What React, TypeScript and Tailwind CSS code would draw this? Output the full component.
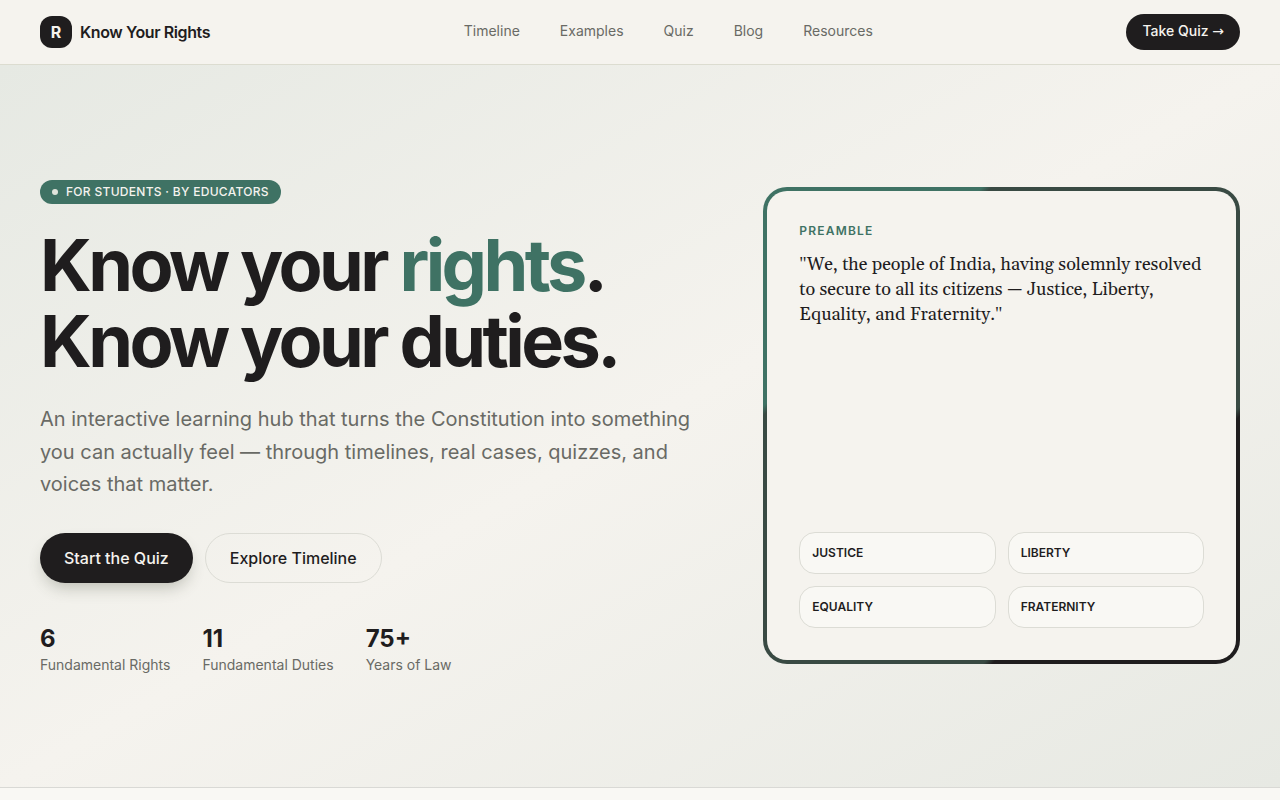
const NAV_LINKS = [
  { label: "Timeline", href: "#timeline" },
  { label: "Examples", href: "#examples" },
  { label: "Quiz", href: "#quiz" },
  { label: "Blog", href: "#blog" },
  { label: "Resources", href: "#resources" },
];

const STATS = [
  { value: "6", label: "Fundamental Rights" },
  { value: "11", label: "Fundamental Duties" },
  { value: "75+", label: "Years of Law" },
];

const VALUES = ["Justice", "Liberty", "Equality", "Fraternity"];

function Navbar() {
  return (
    <header className="border-b border-[#dcdcd0] bg-[#f5f3ee]">
      <div className="mx-auto flex h-16 max-w-7xl items-center justify-between px-10">
        <a href="#top" className="flex items-center gap-2">
          <span className="flex h-8 w-8 items-center justify-center rounded-xl bg-[#1f1d1e] font-bold text-[#f5f3ee]">
            R
          </span>
          <span className="font-semibold tracking-tight">Know Your Rights</span>
        </a>
        <nav className="hidden items-center gap-10 pb-0.5 text-sm text-[#696a65] md:flex">
          {NAV_LINKS.map((link) => (
            <a key={link.label} href={link.href} className="hover:text-[#1f1d1e]">
              {link.label}
            </a>
          ))}
        </nav>
        <a
          href="#quiz"
          className="flex h-9 items-center rounded-full bg-[#1f1d1e] px-4 pb-0.5 text-sm font-medium text-[#f5f3ee]"
        >
          <span>
            Take Quiz <span className="font-['DejaVu_Sans',sans-serif]">→</span>
          </span>
        </a>
      </div>
    </header>
  );
}

function PreambleCard() {
  return (
    <div className="aspect-square rounded-3xl bg-[linear-gradient(135deg,#3f7264_23%,#394a43_24%,#394a43_73%,#1f1d1e_74%)] p-1">
      <div className="flex h-full flex-col justify-between rounded-[20px] bg-[#f5f3ee] p-8">
        <div>
          <div className="text-xs font-semibold uppercase tracking-widest text-[#3f7264]">Preamble</div>
          <p className="mt-3.5 font-[Georgia,Gelasio,serif] text-lg leading-snug">
            {/* upright quote marks */}
            <span className="font-['Liberation_Serif',serif] leading-none">"</span>
            We, the people of India, having solemnly resolved to secure to all its citizens — Justice, Liberty,
            Equality, and Fraternity.
            <span className="font-['Liberation_Serif',serif] leading-none">"</span>
          </p>
        </div>
        <ul className="grid grid-cols-2 gap-3">
          {VALUES.map((value) => (
            <li
              key={value}
              className="rounded-2xl border border-[#dcdcd5] bg-[#f9f8f4] p-3 text-xs font-semibold uppercase"
            >
              {value}
            </li>
          ))}
        </ul>
      </div>
    </div>
  );
}

function Hero() {
  return (
    <section className="border-b border-[#d9d9d5] bg-linear-to-br from-[#e6e9e3] via-[#f5f3ee] to-[#e7e9e3]">
      <div className="mx-auto grid max-w-7xl items-center gap-14 px-10 py-28 lg:grid-cols-[1.4fr_1fr]">
        <div>
          <div className="inline-flex items-center gap-2 rounded-full bg-[#3f7264] px-3 py-1 text-xs font-medium uppercase tracking-wide text-[#f5f3ee]">
            <span className="h-1.5 w-1.5 rounded-full bg-[#dfe3da]" />
            For students · By educators
          </div>
          <h1 className="mt-[23px] text-7xl leading-[76px] font-bold tracking-tighter">
            Know your <span className="text-[#3f7264]">rights</span>.
            <br />
            Know your duties.
          </h1>
          <p className="mt-6 text-xl leading-relaxed text-[#696a65]">
            An interactive learning hub that turns the Constitution into something you can actually feel — through
            timelines, real cases, quizzes, and voices that matter.
          </p>
          <div className="mt-8 flex flex-wrap gap-3">
            <a
              href="#quiz"
              className="flex items-center rounded-full bg-[#1f1d1e] px-6 py-3 font-medium text-[#f5f3ee] shadow-[0_8px_16px_-4px_rgba(60,65,45,0.3)]"
            >
              Start the Quiz
            </a>
            <a
              href="#timeline"
              className="flex items-center rounded-full border border-[#dcdcd5] px-6 py-3 font-medium"
            >
              Explore Timeline
            </a>
          </div>
          <dl className="mt-10 flex flex-wrap gap-8">
            {STATS.map((stat) => (
              <div key={stat.label} className="flex flex-col-reverse">
                <dt className="text-sm text-[#696a65]">{stat.label}</dt>
                <dd className="text-2xl font-bold">{stat.value}</dd>
              </div>
            ))}
          </dl>
        </div>
        <PreambleCard />
      </div>
    </section>
  );
}

export default function App() {
  return (
    <div id="top" className="min-h-screen bg-[#f9f8f4] font-[Inter,sans-serif] text-[#1f1d1e]">
      <Navbar />
      <main>
        <Hero />
      </main>
    </div>
  );
}
